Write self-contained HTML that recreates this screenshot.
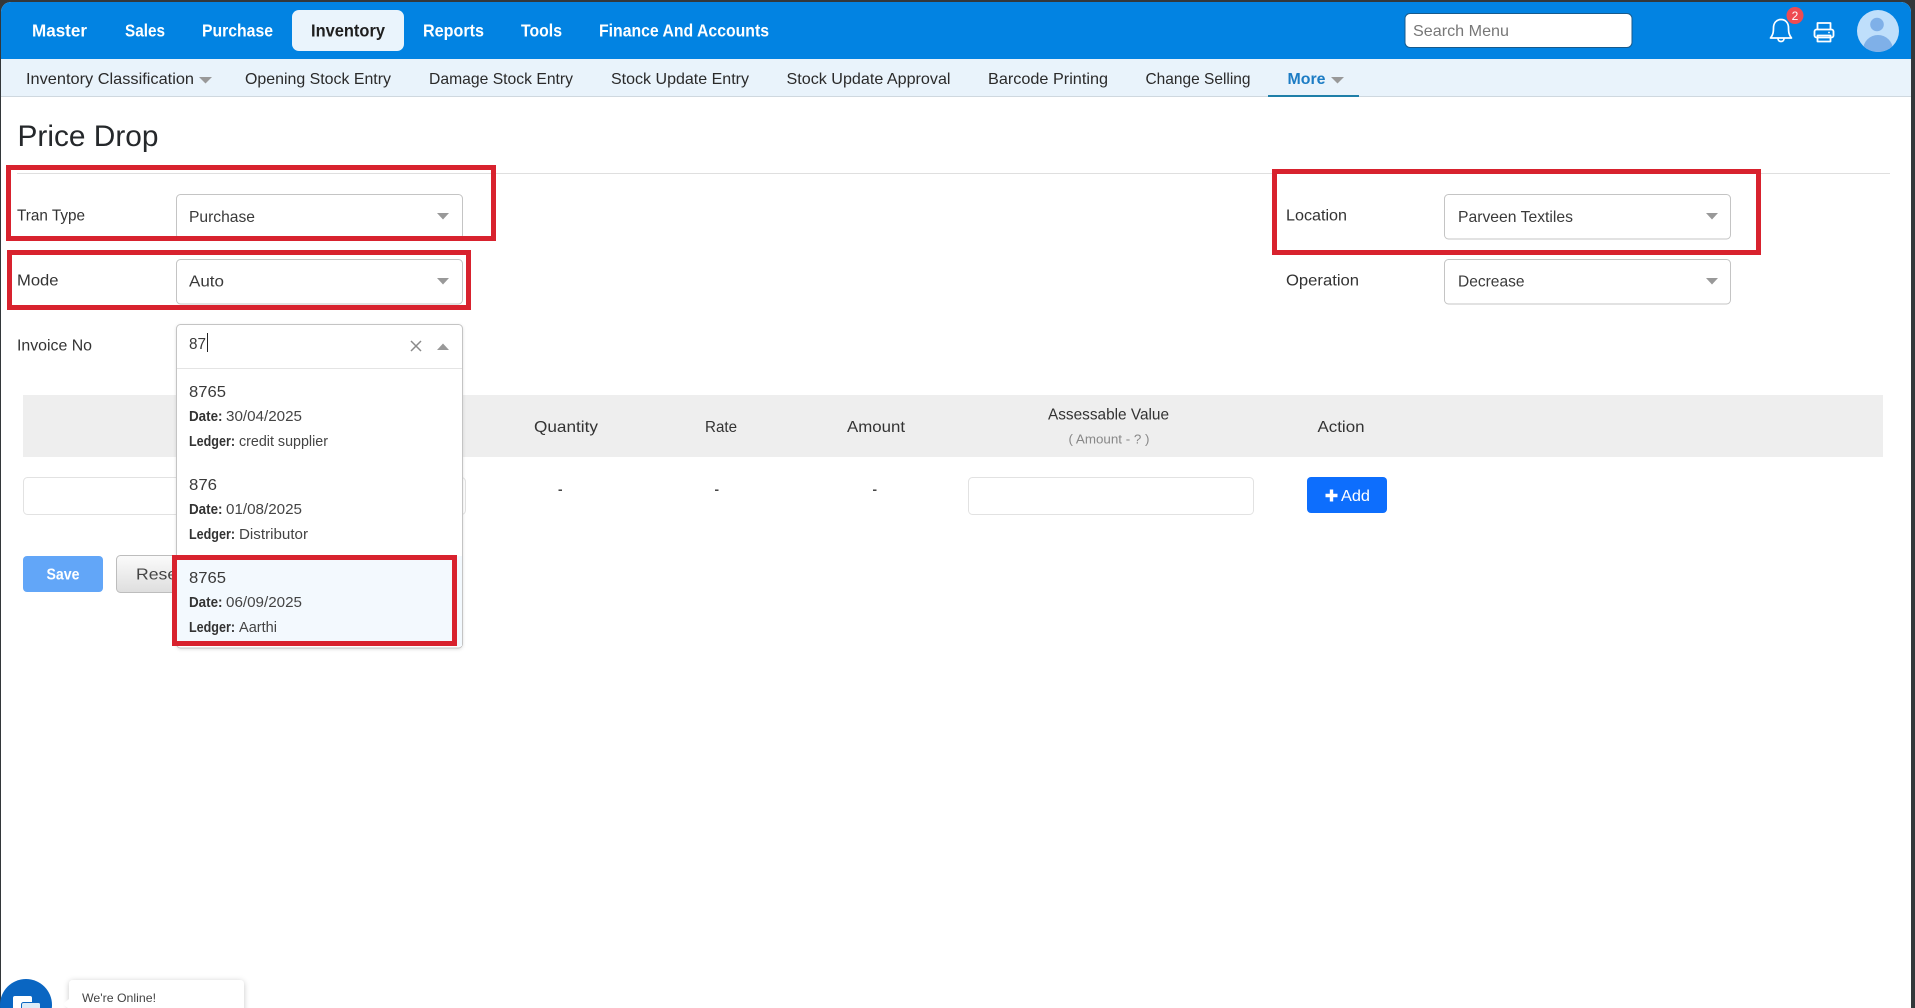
<!DOCTYPE html>
<html lang="en"><head><meta charset="utf-8"><title>Price Drop</title>
<style>
html,body{margin:0;padding:0;width:1915px;height:1008px;overflow:hidden;background:#fff}
svg{display:block;position:absolute;left:0;top:0}
text{font-family:"Liberation Sans",sans-serif;fill:#333;font-size:15.5px;white-space:pre}
.nav{font-size:17.5px;font-weight:700;fill:#fff}
.sub{font-size:16px;fill:#2a2a2a}
.lbl{font-size:16px;fill:#333}
.val{font-size:16px;fill:#3a3a3a}
.sm{font-size:14.5px;fill:#444}
.b{font-size:14.5px;font-weight:700;fill:#333}
.th{font-size:16px;fill:#333}
.sel{fill:#fff;stroke:#c4c4c4;stroke-width:1}
.red{fill:none;stroke:#d8222e;stroke-width:5}
.ar{fill:#999}
</style></head><body>
<svg width="1915" height="1008" viewBox="0 0 1915 1008" xmlns="http://www.w3.org/2000/svg">
<defs>
<filter id="sh" x="-20%" y="-20%" width="140%" height="140%"><feDropShadow dx="0" dy="1" stdDeviation="3" flood-color="#000" flood-opacity=".22"/></filter>
<filter id="sd" x="-5%" y="-5%" width="110%" height="110%"><feDropShadow dx="0" dy="1" stdDeviation="1.5" flood-color="#000" flood-opacity=".12"/></filter>
<linearGradient id="rs" x1="0" y1="0" x2="0" y2="1"><stop offset="0" stop-color="#fbfbfb"/><stop offset="1" stop-color="#dedede"/></linearGradient>
<clipPath id="av"><circle cx="1878" cy="31" r="21"/></clipPath>
</defs>

<!-- window frame -->
<rect width="1915" height="1008" fill="#33373a"/>
<path d="M1 12a10 10 0 0 1 10-10H1901a10 10 0 0 1 10 10V1008H1Z" fill="#fff"/>

<!-- top nav -->
<path d="M1 59V12a10 10 0 0 1 10-10H1901a10 10 0 0 1 10 10V59Z" fill="#0283e2"/>
<rect x="292" y="10" width="112" height="41" rx="7" fill="#eaf4fc"/>
<text class="nav" x="32" y="36.500" textLength="55" lengthAdjust="spacingAndGlyphs">Master</text>
<text class="nav" x="125" y="36.500" textLength="40" lengthAdjust="spacingAndGlyphs">Sales</text>
<text class="nav" x="202" y="36.500" textLength="71" lengthAdjust="spacingAndGlyphs">Purchase</text>
<text class="nav" x="311" y="36.500" textLength="74" lengthAdjust="spacingAndGlyphs" style="fill:#1f1f1f">Inventory</text>
<text class="nav" x="423" y="36.500" textLength="61" lengthAdjust="spacingAndGlyphs">Reports</text>
<text class="nav" x="521" y="36.500" textLength="41" lengthAdjust="spacingAndGlyphs">Tools</text>
<text class="nav" x="599" y="36.500" textLength="170" lengthAdjust="spacingAndGlyphs">Finance And Accounts</text>

<!-- search -->
<rect x="1405" y="13.500" width="227" height="34" rx="5" fill="#fff" stroke="#175a8c" stroke-width="1"/>
<text x="1413" y="36" textLength="96" lengthAdjust="spacingAndGlyphs" style="font-size:16px;fill:#777">Search Menu</text>

<!-- bell -->
<path d="M1781 19.500c-4.600 0-7.500 3.600-7.500 8.200 0 5.200-.8 7.600-3 10.300h21c-2.200-2.700-3-5.100-3-10.300 0-4.600-2.900-8.200-7.500-8.200Z" fill="none" stroke="#fff" stroke-width="1.700" stroke-linejoin="round"/>
<path d="M1778 38.500c0 2 1.300 3 3 3s3-1 3-3" fill="none" stroke="#fff" stroke-width="1.700"/>
<circle cx="1795" cy="15.500" r="8.500" fill="#ee4b52"/>
<text x="1795" y="20" text-anchor="middle" style="font-size:12px;fill:#fff">2</text>
<!-- printer -->
<g fill="none" stroke="#fff" stroke-width="1.800" stroke-linejoin="round">
<path d="M1817.500 29.500V23h13v6.500"/>
<rect x="1814.500" y="29.500" width="19" height="8" rx="2"/>
<rect x="1817.500" y="35.500" width="13" height="6"/>
</g>
<circle cx="1829" cy="32.500" r=".9" fill="#fff"/>
<!-- avatar -->
<circle cx="1878" cy="31" r="21" fill="#bfdffb"/>
<g clip-path="url(#av)" fill="#7fb0e8">
<circle cx="1877" cy="24.500" r="6.800"/>
<ellipse cx="1878" cy="50" rx="15" ry="15"/>
</g>

<!-- sub nav -->
<rect x="1" y="59" width="1910" height="38" fill="#e9f3fb"/>
<rect x="1" y="96" width="1910" height="1" fill="#cfd8df"/>
<text class="sub" x="26" y="84" textLength="168" lengthAdjust="spacingAndGlyphs">Inventory Classification</text>
<path d="M199 77h13l-6.500 6.500Z" class="ar"/>
<text class="sub" x="245" y="84" textLength="146" lengthAdjust="spacingAndGlyphs">Opening Stock Entry</text>
<text class="sub" x="429" y="84" textLength="144" lengthAdjust="spacingAndGlyphs">Damage Stock Entry</text>
<text class="sub" x="611" y="84" textLength="138" lengthAdjust="spacingAndGlyphs">Stock Update Entry</text>
<text class="sub" x="786.500" y="84" textLength="164" lengthAdjust="spacingAndGlyphs">Stock Update Approval</text>
<text class="sub" x="988" y="84" textLength="120" lengthAdjust="spacingAndGlyphs">Barcode Printing</text>
<text class="sub" x="1145.500" y="84" textLength="105" lengthAdjust="spacingAndGlyphs">Change Selling</text>
<text class="sub" x="1287.500" y="84" textLength="38" lengthAdjust="spacingAndGlyphs" style="font-weight:700;fill:#1c7cc4">More</text>
<path d="M1331 77h13l-6.500 6.500Z" class="ar"/>
<rect x="1268" y="95" width="91" height="2" fill="#1f7fa8"/>

<!-- title -->
<text x="17.500" y="146" textLength="141" lengthAdjust="spacingAndGlyphs" style="font-size:30px;fill:#25282b">Price Drop</text>
<rect x="17" y="173" width="1873" height="1" fill="#dfdfdf"/>

<!-- left column -->
<text class="lbl" x="17" y="220.500" textLength="68" lengthAdjust="spacingAndGlyphs">Tran Type</text>
<rect class="sel" x="176.500" y="194.500" width="286" height="44.500" rx="4"/>
<text class="val" x="189" y="222" textLength="66" lengthAdjust="spacingAndGlyphs">Purchase</text>
<path d="M437 213h12l-6 6.500Z" class="ar"/>

<text class="lbl" x="17" y="285.500" textLength="41.500" lengthAdjust="spacingAndGlyphs">Mode</text>
<rect class="sel" x="176.500" y="259.500" width="286" height="44.500" rx="4"/>
<text class="val" x="189" y="286.500" textLength="35" lengthAdjust="spacingAndGlyphs">Auto</text>
<path d="M437 278h12l-6 6.500Z" class="ar"/>

<text class="lbl" x="17" y="350.500" textLength="75" lengthAdjust="spacingAndGlyphs">Invoice No</text>

<!-- right column -->
<text class="lbl" x="1286" y="220.500" textLength="61" lengthAdjust="spacingAndGlyphs">Location</text>
<rect class="sel" x="1444.500" y="194.500" width="286" height="44.500" rx="4"/>
<text class="val" x="1458" y="222" textLength="115" lengthAdjust="spacingAndGlyphs">Parveen Textiles</text>
<path d="M1706 213h12l-6 6.500Z" class="ar"/>
<text class="lbl" x="1286" y="285.500" textLength="73" lengthAdjust="spacingAndGlyphs">Operation</text>
<rect class="sel" x="1444.500" y="259.500" width="286" height="44.500" rx="4"/>
<text class="val" x="1458" y="286.500" textLength="66.500" lengthAdjust="spacingAndGlyphs">Decrease</text>
<path d="M1706 278h12l-6 6.500Z" class="ar"/>

<!-- table -->
<rect x="23" y="395" width="1860" height="62" fill="#eeeeee"/>
<text class="th" x="534" y="432" textLength="64" lengthAdjust="spacingAndGlyphs">Quantity</text>
<text class="th" x="705" y="432" textLength="32" lengthAdjust="spacingAndGlyphs">Rate</text>
<text class="th" x="847" y="432" textLength="58" lengthAdjust="spacingAndGlyphs">Amount</text>
<text class="th" x="1048" y="419.500" textLength="121" lengthAdjust="spacingAndGlyphs">Assessable Value</text>
<text x="1068.500" y="443.500" textLength="81" lengthAdjust="spacingAndGlyphs" style="font-size:13px;fill:#888">( Amount - ? )</text>
<text class="th" x="1317.500" y="432" textLength="47" lengthAdjust="spacingAndGlyphs">Action</text>

<rect x="23.500" y="477.500" width="442" height="37" rx="4" fill="#fff" stroke="#e2e2e2"/>
<rect x="558.500" y="489.500" width="3.500" height="1.400" fill="#333"/>
<rect x="715" y="489.500" width="3.500" height="1.400" fill="#333"/>
<rect x="873" y="489.500" width="3.500" height="1.400" fill="#333"/>
<rect x="968.500" y="477.500" width="285" height="37" rx="4" fill="#fff" stroke="#e2e2e2"/>
<rect x="1307" y="477" width="80" height="36" rx="4" fill="#0d6efd"/>
<path d="M1329.800 489.500h3.400v4.300h4.300v3.400h-4.300v4.300h-3.400v-4.300h-4.300v-3.400h4.300Z" fill="#fff"/>
<text x="1341" y="501" textLength="29" lengthAdjust="spacingAndGlyphs" style="font-size:15.500px;fill:#fff">Add</text>

<!-- buttons -->
<rect x="23" y="556" width="80" height="36" rx="4" fill="#62a6f8"/>
<text x="46.500" y="579.500" textLength="33" lengthAdjust="spacingAndGlyphs" style="font-size:16px;font-weight:700;fill:#fff">Save</text>
<rect x="116.500" y="555.500" width="90" height="37" rx="4" fill="url(#rs)" stroke="#bdbdbd"/>
<text x="136" y="579.500" textLength="46" lengthAdjust="spacingAndGlyphs" style="font-size:16px;fill:#444">Reset</text>

<!-- dropdown -->
<rect x="176.500" y="324.500" width="286" height="323.500" rx="4" fill="#fff" stroke="#c4c4c4" filter="url(#sd)"/>
<rect x="177" y="368" width="285" height="1" fill="#e4e4e4"/>
<text class="val" x="189" y="349" textLength="17" lengthAdjust="spacingAndGlyphs">87</text>
<rect x="207" y="333" width="1" height="19" fill="#222"/>
<path d="M411 341l10 10M421 341l-10 10" stroke="#8a8a8a" stroke-width="1.500" fill="none"/>
<path d="M437 350h12l-6-6.500Z" class="ar"/>

<text class="val" x="189" y="397" textLength="37" lengthAdjust="spacingAndGlyphs">8765</text>
<text class="b" x="189" y="421" textLength="33.500" lengthAdjust="spacingAndGlyphs">Date:</text>
<text class="sm" x="226" y="421" textLength="76" lengthAdjust="spacingAndGlyphs">30/04/2025</text>
<text class="b" x="189" y="446" textLength="46" lengthAdjust="spacingAndGlyphs">Ledger:</text>
<text class="sm" x="239" y="446" textLength="89" lengthAdjust="spacingAndGlyphs">credit supplier</text>

<text class="val" x="189" y="490" textLength="28" lengthAdjust="spacingAndGlyphs">876</text>
<text class="b" x="189" y="514" textLength="33.500" lengthAdjust="spacingAndGlyphs">Date:</text>
<text class="sm" x="226" y="514" textLength="76" lengthAdjust="spacingAndGlyphs">01/08/2025</text>
<text class="b" x="189" y="539" textLength="46" lengthAdjust="spacingAndGlyphs">Ledger:</text>
<text class="sm" x="239" y="539" textLength="69" lengthAdjust="spacingAndGlyphs">Distributor</text>

<rect x="177" y="556" width="285" height="90" fill="#f3f9fe"/>
<text class="val" x="189" y="583" textLength="37" lengthAdjust="spacingAndGlyphs">8765</text>
<text class="b" x="189" y="607" textLength="33.500" lengthAdjust="spacingAndGlyphs">Date:</text>
<text class="sm" x="226" y="607" textLength="76" lengthAdjust="spacingAndGlyphs">06/09/2025</text>
<text class="b" x="189" y="632" textLength="46" lengthAdjust="spacingAndGlyphs">Ledger:</text>
<text class="sm" x="239" y="632" textLength="38" lengthAdjust="spacingAndGlyphs">Aarthi</text>

<!-- annotation boxes -->
<rect class="red" x="8.500" y="167.500" width="485" height="71"/>
<rect class="red" x="9.500" y="252.500" width="459" height="55"/>
<rect class="red" x="1274.500" y="171.500" width="484" height="81"/>
<rect class="red" x="174.500" y="557.500" width="280" height="86"/>

<!-- chat widget -->
<circle cx="26" cy="1005" r="26" fill="#0a66c2"/>
<rect x="13" y="996" width="19" height="20" rx="2" fill="#fff"/>
<rect x="21.500" y="1002.500" width="19" height="20" rx="2" fill="#dcebf7" stroke="#0a66c2"/>
<rect x="69" y="980" width="175" height="40" rx="4" fill="#fff" filter="url(#sh)"/>
<path d="M63 1004l6-5v10Z" fill="#fff"/>
<text x="82" y="1002" textLength="74" lengthAdjust="spacingAndGlyphs" style="font-size:12px;fill:#444">We're Online!</text>
</svg>
</body></html>
